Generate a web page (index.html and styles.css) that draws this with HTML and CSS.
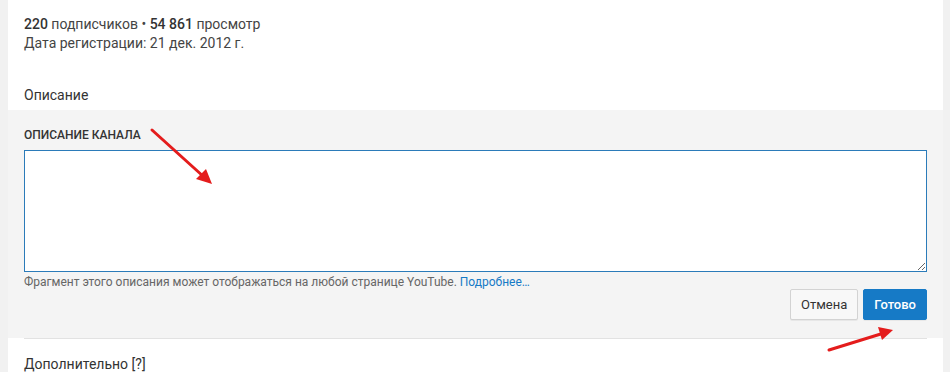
FILE: index.html
```html
<html>
  <head>
    <meta charset="utf-8">
    <link rel="stylesheet" href="styles.css">
  </head>
  <body>
    <main class="card">
      <section class="stats">
        <p><b>220</b> подписчиков • <b>54 861</b> просмотр</p>
        <p>Дата регистрации: 21 дек. 2012 г.</p>
      </section>
      <h2 class="section-title">Описание</h2>
      <section class="editor">
        <label class="field-label">Описание канала</label>
        <textarea class="field"></textarea>
        <p class="hint">Фрагмент этого описания может отображаться на любой странице YouTube. <a href="#">Подробнее…</a></p>
        <div class="actions">
          <button class="btn">Отмена</button>
          <button class="btn primary">Готово</button>
        </div>
      </section>
      <h2 class="section-title more">Дополнительно [?]</h2>
    </main>
    <svg class="arrows" viewBox="0 0 950 372">
      <line x1="152" y1="130" x2="204" y2="177" stroke="#e41c1c" stroke-width="3" stroke-linecap="round"/>
      <path d="M212 184 L196 179 L206 169 Z" fill="#e41c1c"/>
      <line x1="829" y1="350" x2="884" y2="333" stroke="#e41c1c" stroke-width="3" stroke-linecap="round"/>
      <path d="M893 330 L882 340 L878 327 Z" fill="#e41c1c"/>
    </svg>
  </body>
</html>
```
FILE: styles.css
```css
html {
  background-color: #f1f1f1;
}

body {
  margin: 0;
  font-family: Roboto, Arial, sans-serif;
  color: #333;
  position: relative;
  height: 372px;
  overflow: hidden;
}

.card {
  background: #fff;
  margin: 0 7px 0 8px;
  height: 372px;
}

p {
  margin: 0;
}

.stats {
  padding: 15px 16px 0;
  font-size: 14px;
  line-height: 19px;
  color: #444;
}

.stats b {
  font-weight: 500;
  color: #333;
}

.section-title {
  font-size: 14px;
  font-weight: 400;
  margin: 0;
  padding: 33px 16px 6px;
  line-height: 18px;
}

.editor {
  background: #f4f4f4;
  padding: 18px 16px 18px;
  display: flex;
  flex-direction: column;
}

.field-label {
  font-size: 12px;
  font-weight: 500;
  text-transform: uppercase;
  line-height: 14px;
  margin-bottom: 8px;
}

.field {
  box-sizing: border-box;
  height: 122px;
  border: 1px solid #2b7bb9;
  background: #fff;
  margin: 0;
  resize: vertical;
  outline: none;
}

.hint {
  font-size: 12px;
  color: #666;
  line-height: 14px;
  margin-top: 3px;
}

.hint a {
  color: #167ac6;
  text-decoration: none;
}

.actions {
  display: flex;
  justify-content: flex-end;
  gap: 5px;
}

.btn {
  height: 31px;
  padding: 0 10px;
  font-family: Roboto, Arial, sans-serif;
  font-size: 13px;
  border: 1px solid #d3d3d3;
  border-radius: 2px;
  background: #f8f8f8;
  color: #333;
  box-shadow: 0 1px 0 rgba(0, 0, 0, 0.05);
}

.btn.primary {
  background: #167ac6;
  border-color: #167ac6;
  color: #fff;
  font-weight: 500;
}

.section-title.more {
  margin: 0 16px;
  padding: 16px 0 0;
  border-top: 1px solid #e2e2e2;
}

.arrows {
  position: absolute;
  top: 0;
  left: 0;
  width: 950px;
  height: 372px;
  pointer-events: none;
}
```
